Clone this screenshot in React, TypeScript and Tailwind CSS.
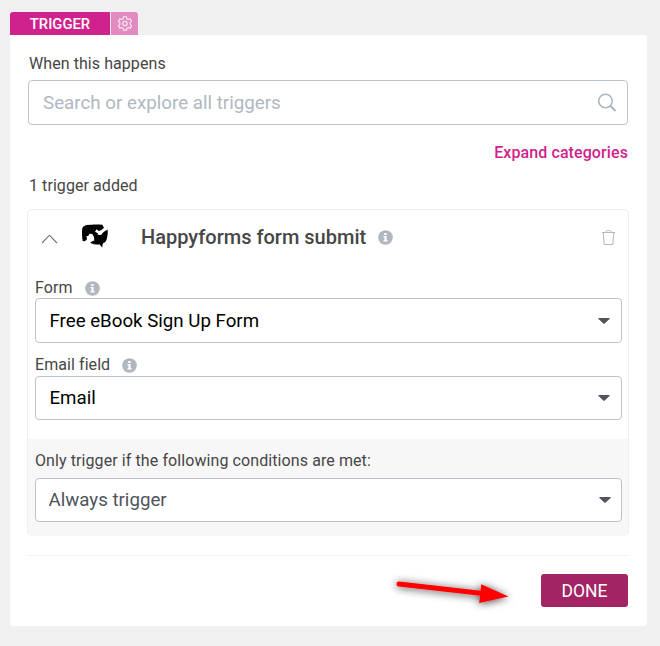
import { useState, type ReactNode } from "react";
import { clsx } from "clsx";

const FORMS = "Free eBook Sign Up Form";

export default function App() {
  const [query, setQuery] = useState("");
  const [open, setOpen] = useState(true);

  return (
    <div className="min-h-[646px] bg-[#f0f0f0] pl-[10px] pr-[13px] pt-3 font-['Roboto',sans-serif] text-base text-[#464646]">
      {/* Tabs */}
      <div className="flex h-[23px] gap-px">
        <div className="flex w-[100px] items-center justify-center rounded-tl-[3px] bg-[#d0228c] pt-px text-[14.8px] font-medium leading-none text-white">
          TRIGGER
        </div>
        <button className="flex w-[27px] items-center justify-center rounded-tr-[3px] bg-[#e28bc0]">
          <GearIcon />
        </button>
      </div>

      <div className="h-[591px] rounded-b-[3px] rounded-tr-[3px] bg-white pl-[17px] pr-[18px] pt-[19px]">
        <div className="pl-[2px] leading-5 tracking-[0.07px]">When this happens</div>
        <div className="ml-px mr-px mt-[6px] flex h-[45px] items-center rounded-[4px] border border-[#bcc3ca] pl-[14px] pr-[10px]">
          <input
            value={query}
            onChange={(e) => setQuery(e.target.value)}
            placeholder="Search or explore all triggers"
            className="h-[20px] flex-1 text-[18.750px] leading-[20px] outline-none placeholder:text-[#b0b8bf]"
          />
          <SearchIcon />
        </div>

        <div className="mr-px mt-[18px] text-right font-medium leading-5 tracking-[0.1px] text-[#d0228c]">
          Expand categories
        </div>
        <div className="mt-[13px] pl-[2px] leading-5 tracking-[0.07px]">1 trigger added</div>

        {/* Added trigger */}
        <div className="mt-[13px] h-[327px] rounded-[5px] border border-[#eceeef]">
          <div className="flex h-[54px] items-center pl-[13px] pr-[12px]">
            <button onClick={() => setOpen(!open)}>
              <ChevronIcon open={open} />
            </button>
            <HappyformsLogo />
            <div className="ml-[33px] text-xl font-medium leading-6">Happyforms form submit</div>
            <InfoIcon className="ml-3" />
            <TrashIcon />
          </div>

          <FieldLabel className="mt-[13px]">Form</FieldLabel>
          <SelectBox className="h-[45px] pl-[13.500px] pr-[11px] text-black">{FORMS}</SelectBox>
          <FieldLabel className="mt-[11px]">Email field</FieldLabel>
          <SelectBox className="mt-px h-[44px] pl-[13.500px] pr-[11px] text-black">Email</SelectBox>

          <div className="mt-[19px] h-[97px] rounded-b-[4px] bg-[#f7f7f7] pt-[12px]">
            <div className="pl-[7px] leading-5 tracking-[0.09px]">Only trigger if the following conditions are met:</div>
            <SelectBox className="mt-[7px] h-[44px] pl-[12.500px] pr-[10px] text-[#50545b]">Always trigger</SelectBox>
          </div>
        </div>

        {/* Footer */}
        <div className="ml-px mt-[19px] flex items-start justify-end border-t border-[#f3f3f3] pt-[18px]">
          <ArrowPointer />
          <button className="mr-px h-[33px] w-[87px] rounded-[3px] bg-[#a32464] pt-px text-[17.500px] leading-[32px] text-white">
            DONE
          </button>
        </div>
      </div>
    </div>
  );
}

function FieldLabel({ children, className }: { children: ReactNode; className?: string }) {
  return (
    <div className={clsx("flex h-[21px] items-center pl-[7px] leading-5 tracking-[0.07px]", className)}>
      {children}
      <InfoIcon className="ml-[12px] mt-px" />
    </div>
  );
}

function SelectBox({ children, className }: { children: ReactNode; className?: string }) {
  return (
    <div
      className={clsx(
        "ml-[7px] mr-[6px] flex items-center justify-between rounded-[4px] border border-[#bcc3ca] bg-white text-[18.700px]",
        className
      )}
    >
      <span className="h-[20px] overflow-hidden leading-[20px]">{children}</span>
      <svg width="12" height="6" viewBox="0 0 12 6" fill="#50545b">
        <path d="M1 0h10c.8 0 1 .6.5 1.100L6.700 5.600a1 1 0 0 1-1.400 0L.500 1.100C0 .600.200 0 1 0z" />
      </svg>
    </div>
  );
}

function GearIcon() {
  return (
    <svg width="16" height="16" viewBox="0 0 16 16" fill="none" stroke="#fff" strokeOpacity=".85" strokeWidth="1.100">
      <path strokeLinejoin="round" d="M6.600.700h2.800l.4 1.900 1.500.9 1.900-.7 1.400 2.400-1.500 1.400v1.800l1.500 1.400-1.400 2.400-1.900-.7-1.500.9-.4 1.900H6.600l-.4-1.900-1.500-.9-1.900.7-1.400-2.400 1.500-1.400V6.600L1.400 5.200l1.400-2.400 1.900.7 1.500-.9z" />
      <circle cx="8" cy="7.500" r="2.200" />
    </svg>
  );
}

function SearchIcon() {
  return (
    <svg width="19" height="19" viewBox="0 0 19 19" fill="none" stroke="#abb4bc">
      <circle cx="7.500" cy="8" r="6.800" strokeWidth="1.500" />
      <path d="M12.500 13l5 5" strokeWidth="1.900" />
    </svg>
  );
}

function ChevronIcon({ open }: { open: boolean }) {
  return (
    <svg width="17" height="10" viewBox="0 0 17 10" fill="none" stroke="#6b6f74" strokeWidth="1.100" className={clsx("mt-[3px]", !open && "rotate-180")}>
      <path d="M1 9l7.500-7.800L16 9" />
    </svg>
  );
}

function HappyformsLogo() {
  return (
    <svg width="26" height="24" viewBox="0 0 26 24" className="-mt-[2px] ml-[24px]">
      <path d="M.2 5C.6 2.500 2.500 1.300 5 1 10 .3 15 .3 20.300.8L22 3.800 19.500 6l-2.800 1-2-1.800-1.700 2.600 3.200 1.600-.8 1.300 3.600.3 2.600-3 4-2.500C26 9.500 25.500 13.500 24 17c-.8 1.300-2 2-3.200 2.600l-.6 3.800-2.600-2.900c-3.200.3-6.600-.3-9.600-1.800L10.500 17.300l1.800-.7-.3-3.500L10.300 10 7.500 9.800 6.200 12l-2 .3L5 14l-.3 1.800-2 1.500L.7 17C0 13.500-.2 9 .2 5z" />
    </svg>
  );
}

function InfoIcon({ className }: { className?: string }) {
  return (
    <svg width="15" height="15" viewBox="0 0 15 15" className={className}>
      <circle cx="7.500" cy="7.500" r="7.300" fill="#b0b7be" />
      <path fill="#fff" d="M6.300 3h2.300v2H6.300zM5.500 6h3.100v4.200h1v1.300H5.400v-1.300h1V7.300h-.9z" />
    </svg>
  );
}

function TrashIcon() {
  return (
    <svg width="14" height="16" viewBox="0 0 14 16" fill="none" stroke="#b0b7be" className="ml-auto mt-px">
      <path d="M0 2.500h13M3.500 2.300C3.800 1 4.500.500 6.500.500s2.700.5 3 1.800M1.200 2.500l1 12h8.600l1-12" />
    </svg>
  );
}

function ArrowPointer() {
  return (
    <svg width="140" height="60" viewBox="0 0 140 60" className="mr-[15px] -mt-[14px] -mb-[14px]">
      <defs>
        <filter id="arrow-shadow" x="-20%" y="-80%" width="140%" height="260%">
          <feDropShadow dx="0" dy="1" stdDeviation="4.500" floodColor="#000" floodOpacity=".75" />
        </filter>
      </defs>
      <g fill="red" stroke="red" filter="url(#arrow-shadow)">
        <path d="M13 24l84 9.500" strokeWidth="5" strokeLinecap="round" />
        <path d="M95.300 24.200L122.500 36.500 93.200 43z" stroke="none" />
      </g>
    </svg>
  );
}
